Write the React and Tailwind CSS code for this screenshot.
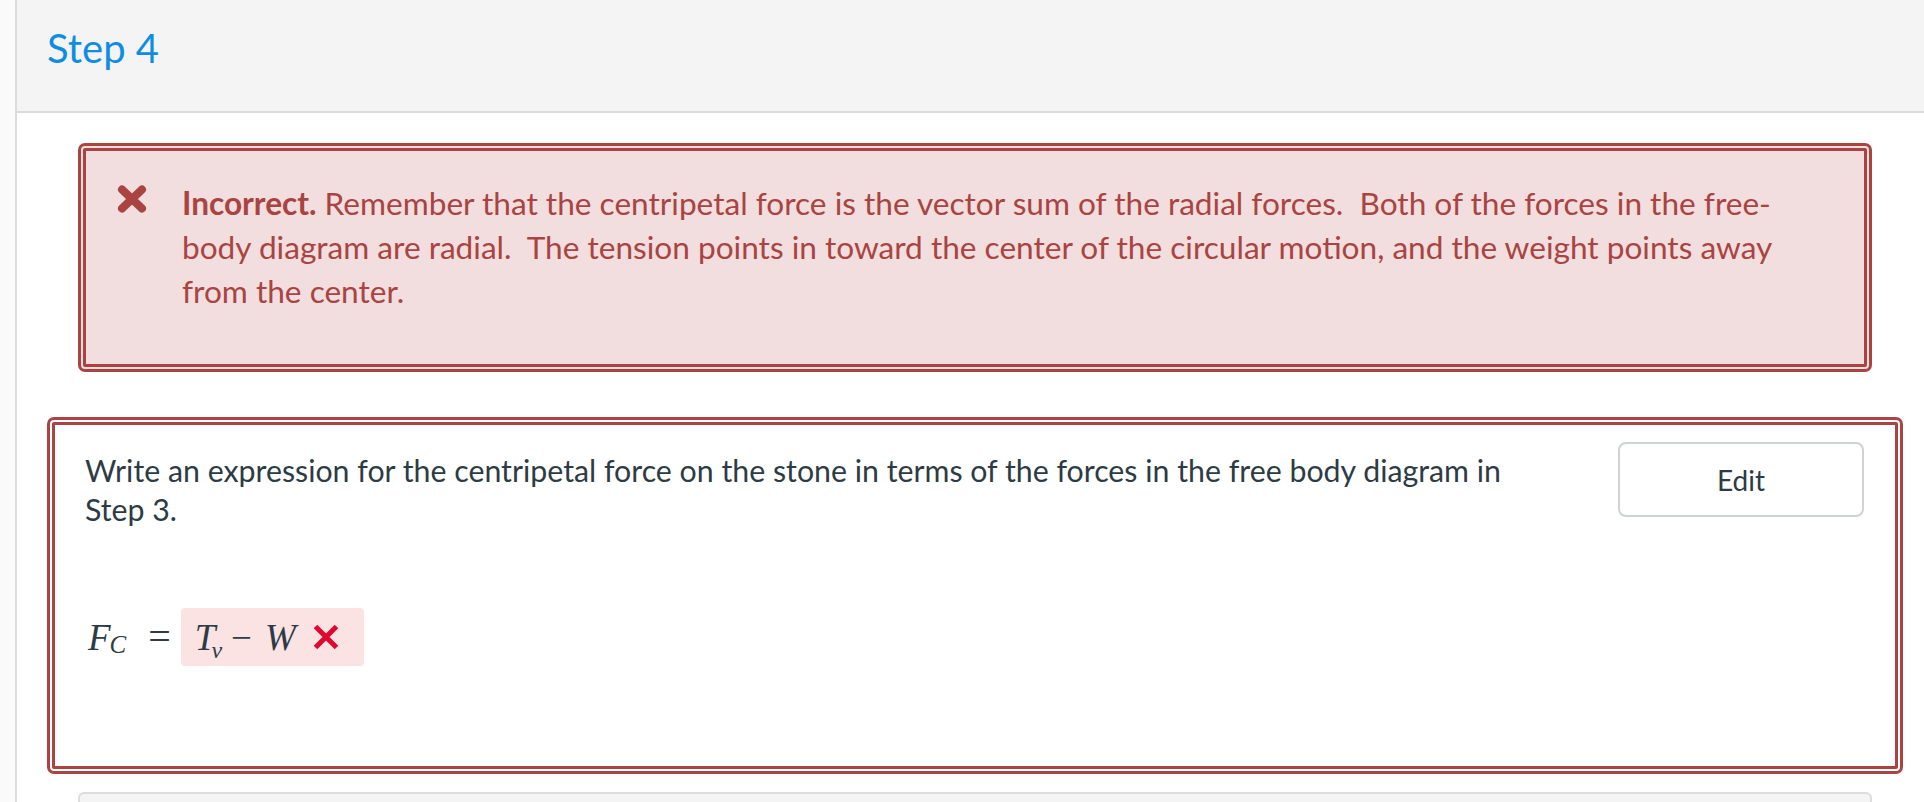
import React from "react";

function BoldX() {
  return (
    <svg width="30" height="28" viewBox="0 0 30 28" className="shrink-0">
      <path d="M5 4.5 L25 23.5 M25 4.5 L5 23.5" stroke="#a94442" strokeWidth="8" strokeLinecap="round" fill="none" />
    </svg>
  );
}

function RedX() {
  return (
    <svg width="26" height="26" viewBox="0 0 26 26" className="shrink-0">
      <path d="M2.5 2.5 L23.5 23.5 M23.5 2.5 L2.5 23.5" stroke="#e0082e" strokeWidth="5" fill="none" />
    </svg>
  );
}

export default function App() {
  const lato = { fontFamily: "Lato, 'Liberation Sans', sans-serif" };
  return (
    <div className="flex min-h-screen bg-white" style={lato}>
      <div className="w-[17px] shrink-0 bg-[#fafafa] border-r-2 border-[#dcdcdc]" />
      <div className="flex-1 min-w-0">
        <div className="h-[113px] bg-[#f4f4f4] border-b-2 border-[#dcdcdc] pl-[30px] pt-[24px]">
          <h2 className="text-[40px] leading-[48px] text-[#0e8de3] font-normal">Step 4</h2>
        </div>
        <div className="pl-[30px] pr-[21px] pt-[30px]">
          <div className="mx-[31px] border-[8px] border-double border-[#a94442] rounded-[7px] bg-[#f2dede] flex items-start pl-[31px] pt-[30px] pb-[51px] pr-[58px]">
            <div className="mt-[4px]">
              <BoldX />
            </div>
            <p className="ml-[35px] text-[31.6px] leading-[44px] text-[#a94442]">
              <strong className="font-bold">Incorrect.</strong> Remember that the centripetal force is the vector sum of the radial forces.{"\u00a0"} Both of the forces in the free-body diagram are radial.{"\u00a0"} The tension points in toward the center of the circular motion, and the weight points away from the center.
            </p>
          </div>

          <div className="mt-[45px] border-[8px] border-double border-[#a94442] rounded-[7px] bg-white pl-[30px] pr-[31px] pt-[17px] pb-[100px]">
            <div className="flex items-start gap-[80px]">
              <p className="flex-1 mt-[9px] text-[30.3px] leading-[39px] text-[#2d3b45]">
                Write an expression for the centripetal force on the stone in terms of the forces in the free body diagram in Step 3.
              </p>
              <button className="w-[246px] h-[75px] shrink-0 border-2 border-[#cfd3d6] rounded-[8px] bg-white text-[28px] text-[#2d3b45] flex items-center justify-center">
                Edit
              </button>
            </div>
            <div
              className="mt-[79px] flex items-center text-[#2d3b45]"
              style={{ fontFamily: "'Liberation Serif', 'Times New Roman', serif" }}
            >
              <span className="ml-[3px] italic text-[37px] leading-none">F</span>
              <span className="italic text-[25px] leading-none mt-[14px] -ml-[1px]">C</span>
              <span className="ml-[22px] text-[40px] leading-none">=</span>
              <div className="ml-[10px] h-[58px] bg-[#fbe3e4] rounded-[4px] flex items-center pl-[14px] pr-[25px]">
                <span className="italic text-[37px] leading-none">T</span>
                <span className="italic text-[24px] leading-none mt-[26px] -ml-[4px]">v</span>
                <span className="ml-[9px] text-[37px] leading-none">−</span>
                <span className="ml-[13px] italic text-[37px] leading-none">W</span>
                <span className="ml-[17px]">
                  <RedX />
                </span>
              </div>
            </div>
          </div>

          <div className="mt-[18px] mx-[31px] h-[60px] bg-[#f4f4f4] border-2 border-[#dddddd] rounded-t-[6px]" />
        </div>
      </div>
    </div>
  );
}
